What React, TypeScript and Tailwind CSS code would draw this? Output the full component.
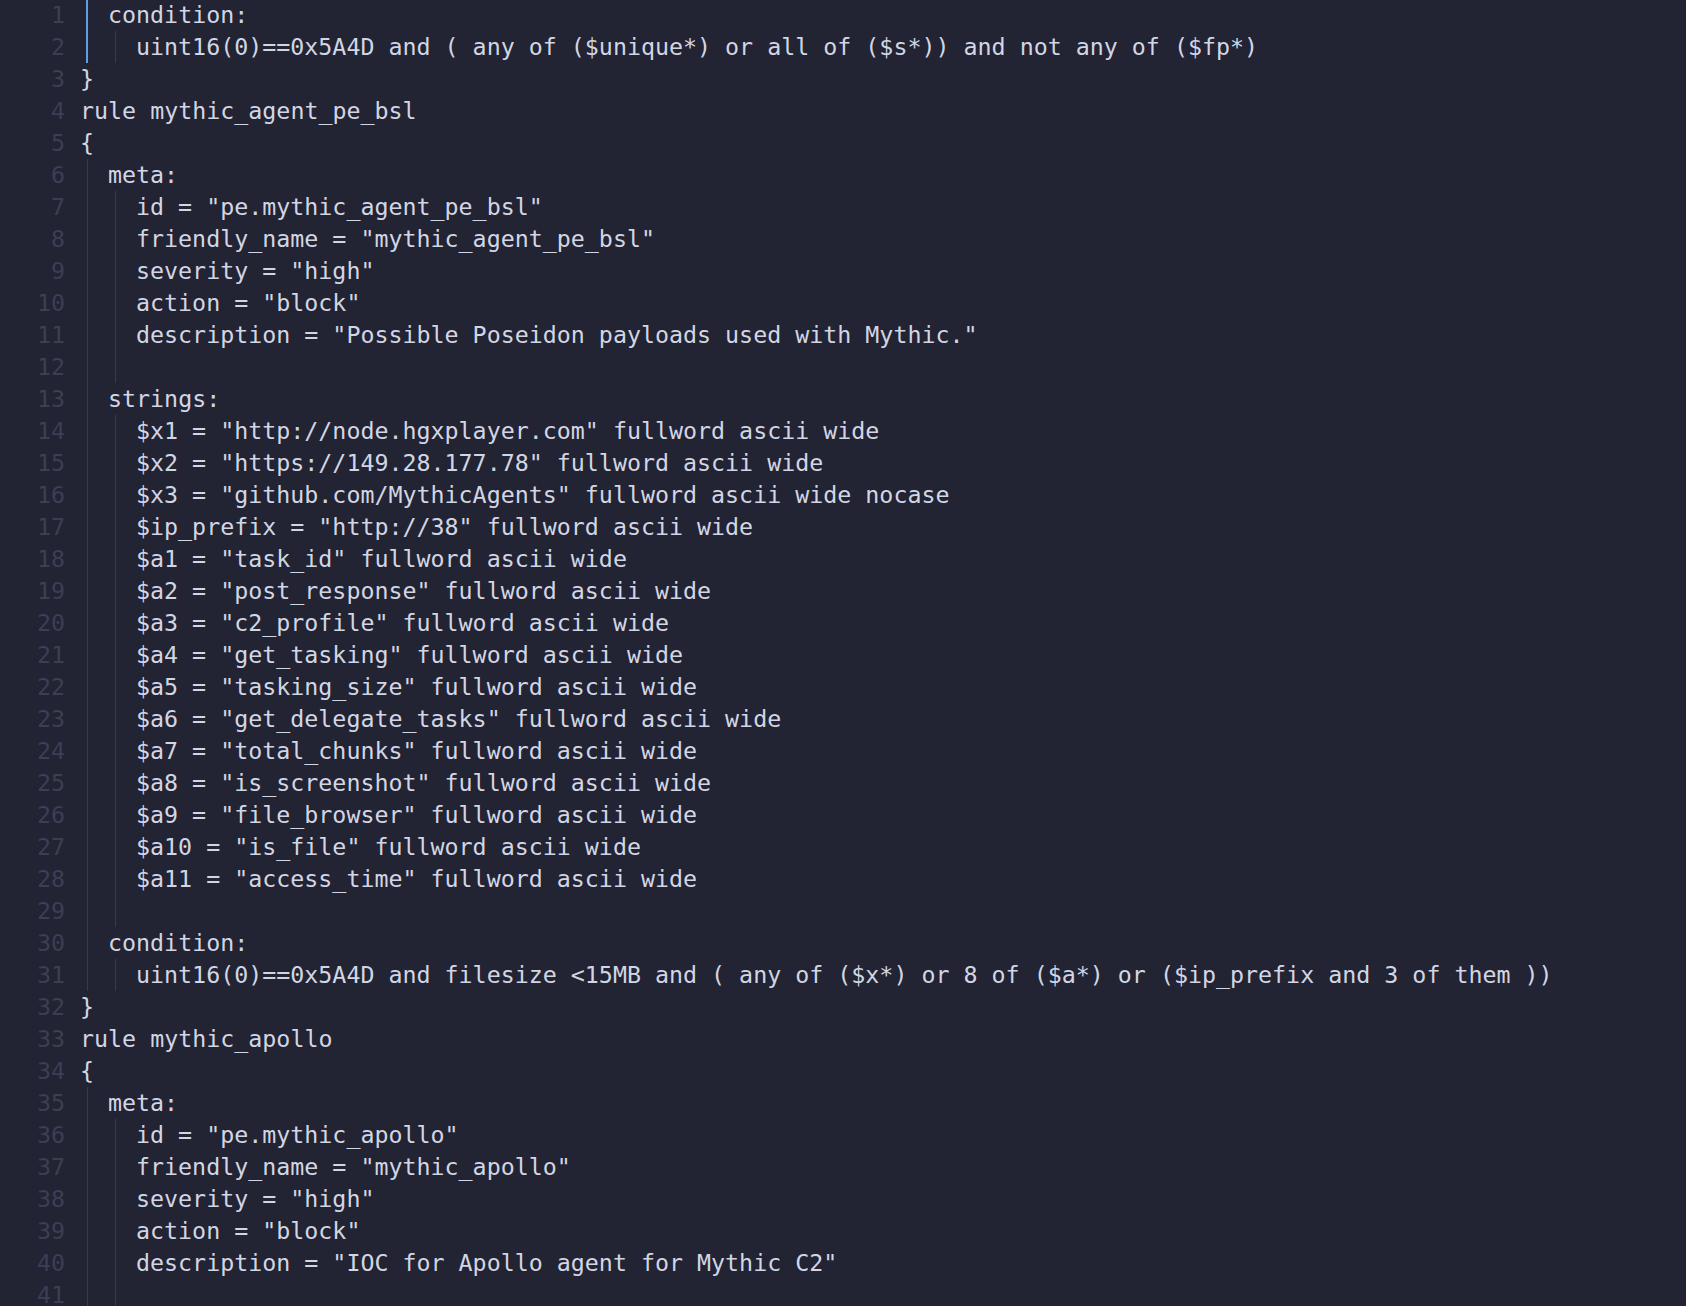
type Line = { indent: number; text: string; guides?: number };

const lines: Line[] = [
  { indent: 1, text: "condition:" },
  { indent: 2, text: "uint16(0)==0x5A4D and ( any of ($unique*) or all of ($s*)) and not any of ($fp*)" },
  { indent: 0, text: "}" },
  { indent: 0, text: "rule mythic_agent_pe_bsl" },
  { indent: 0, text: "{" },
  { indent: 1, text: "meta:" },
  { indent: 2, text: 'id = "pe.mythic_agent_pe_bsl"' },
  { indent: 2, text: 'friendly_name = "mythic_agent_pe_bsl"' },
  { indent: 2, text: 'severity = "high"' },
  { indent: 2, text: 'action = "block"' },
  { indent: 2, text: 'description = "Possible Poseidon payloads used with Mythic."' },
  { indent: 2, text: "" },
  { indent: 1, text: "strings:" },
  { indent: 2, text: '$x1 = "http://node.hgxplayer.com" fullword ascii wide' },
  { indent: 2, text: '$x2 = "https://149.28.177.78" fullword ascii wide' },
  { indent: 2, text: '$x3 = "github.com/MythicAgents" fullword ascii wide nocase' },
  { indent: 2, text: '$ip_prefix = "http://38" fullword ascii wide' },
  { indent: 2, text: '$a1 = "task_id" fullword ascii wide' },
  { indent: 2, text: '$a2 = "post_response" fullword ascii wide' },
  { indent: 2, text: '$a3 = "c2_profile" fullword ascii wide' },
  { indent: 2, text: '$a4 = "get_tasking" fullword ascii wide' },
  { indent: 2, text: '$a5 = "tasking_size" fullword ascii wide' },
  { indent: 2, text: '$a6 = "get_delegate_tasks" fullword ascii wide' },
  { indent: 2, text: '$a7 = "total_chunks" fullword ascii wide' },
  { indent: 2, text: '$a8 = "is_screenshot" fullword ascii wide' },
  { indent: 2, text: '$a9 = "file_browser" fullword ascii wide' },
  { indent: 2, text: '$a10 = "is_file" fullword ascii wide' },
  { indent: 2, text: '$a11 = "access_time" fullword ascii wide' },
  { indent: 2, text: "" },
  { indent: 1, text: "condition:" },
  { indent: 2, text: "uint16(0)==0x5A4D and filesize <15MB and ( any of ($x*) or 8 of ($a*) or ($ip_prefix and 3 of them ))" },
  { indent: 0, text: "}" },
  { indent: 0, text: "rule mythic_apollo" },
  { indent: 0, text: "{" },
  { indent: 1, text: "meta:" },
  { indent: 2, text: 'id = "pe.mythic_apollo"' },
  { indent: 2, text: 'friendly_name = "mythic_apollo"' },
  { indent: 2, text: 'severity = "high"' },
  { indent: 2, text: 'action = "block"' },
  { indent: 2, text: 'description = "IOC for Apollo agent for Mythic C2"' },
  { indent: 2, text: "" },
];

function Guide({ active }: { active: boolean }) {
  return (
    <div className="w-[28px] h-8 shrink-0 pl-[7px]">
      {active ? (
        <div className="ml-[-1px] w-[2px] h-full bg-[#5b9fe8]" />
      ) : (
        <div className="w-px h-full bg-[#373a4c]" />
      )}
    </div>
  );
}

export default function App() {
  return (
    <main
      className="h-screen overflow-hidden bg-[#222333] text-[#d2d6e3] text-[23.3px] leading-8"
      style={{ fontFamily: '"DejaVu Sans Mono", "Liberation Mono", monospace' }}
    >
      <div className="-mt-px">
        {lines.map((line, i) => (
          <div key={i} className="flex h-8 whitespace-pre">
            <div className="w-[65px] shrink-0 text-right text-[#3c3f53]">{i + 1}</div>
            <div className="ml-[15px] flex">
              {Array.from({ length: line.indent }).map((_, g) => (
                <Guide key={g} active={i < 2 && g === 0} />
              ))}
              <span>{line.text}</span>
            </div>
          </div>
        ))}
      </div>
    </main>
  );
}
